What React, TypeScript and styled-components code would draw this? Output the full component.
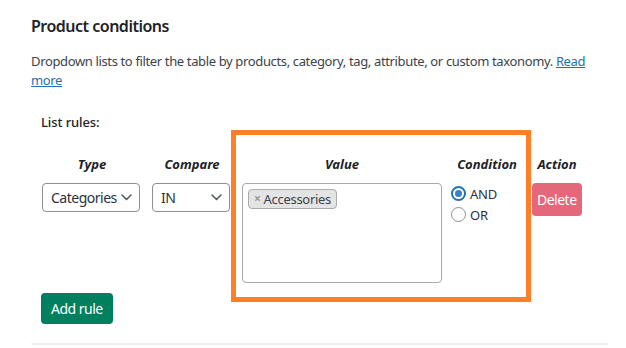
import React from "react";
import styled, { createGlobalStyle } from "styled-components";

const GlobalStyle = createGlobalStyle`
  html, body { margin: 0; padding: 0; background: #fff; }
  body {
    font-family: "Noto Sans", "Open Sans", sans-serif;
    color: #3c434a;
    -webkit-font-smoothing: antialiased;
  }
`;

const Page = styled.div`
  width: 626px;
  height: 348px;
  box-sizing: border-box;
  padding: 15px 18px 0 31px;
  overflow: hidden;
`;

const Title = styled.h2`
  margin: 0;
  font-size: 16px;
  line-height: 22px;
  font-weight: 600;
  letter-spacing: -0.5px;
  color: #1d2327;
`;

const Description = styled.p`
  margin: 15px 0 0;
  font-size: 13px;
  line-height: 19px;
  letter-spacing: -0.36px;
  color: #3c434a;
`;

const Link = styled.a`
  color: #2271b1;
  text-decoration: underline;
`;

const Rules = styled.div`
  position: relative;
  margin-top: 23px;
  padding-left: 10px;
`;

const RulesLabel = styled.div`
  font-size: 13px;
  line-height: 19px;
  font-weight: 500;
  letter-spacing: -0.1px;
  color: #1d2327;
`;

const RulesGrid = styled.div`
  display: grid;
  grid-template-columns: 100px 80px 200px 70px 50px;
  column-gap: 10px;
  row-gap: 9px;
  margin-top: 23px;
  padding-left: 1px;
`;

const HeadCell = styled.div`
  font-size: 13px;
  line-height: 19px;
  font-weight: 700;
  font-style: italic;
  color: #1d2327;
  text-align: center;
  white-space: nowrap;
`;

const Cell = styled.div`
  display: flex;
  flex-direction: column;
  align-items: flex-start;
`;

const SelectBox = styled.div<{ $width: number }>`
  width: ${(p) => p.$width}px;
  height: 29px;
  box-sizing: border-box;
  border: 1px solid #8c8f94;
  border-radius: 4px;
  display: flex;
  align-items: center;
  justify-content: space-between;
  padding: 0 7px 0 8px;
  font-size: 14px;
  letter-spacing: -0.5px;
  color: #2c3338;
  background: #fff;
`;

const Chevron = () => (
  <svg width="11" height="7" viewBox="0 0 11 7" fill="none">
    <path d="M1 1l4.5 4.5L10 1" stroke="#50575e" strokeWidth="1.5" strokeLinecap="round" strokeLinejoin="round" />
  </svg>
);

const ValueBox = styled.div`
  width: 200px;
  height: 100px;
  box-sizing: border-box;
  border: 1px solid #aaa;
  border-radius: 4px;
  padding: 5px;
  background: #fff;
  display: flex;
  align-items: flex-start;
`;

const Chip = styled.span`
  display: inline-flex;
  align-items: center;
  gap: 3px;
  height: 20px;
  box-sizing: border-box;
  padding: 0 5px 1px 5px;
  background: #e4e4e4;
  border: 1px solid #aaa;
  border-radius: 4px;
  font-size: 13px;
  letter-spacing: -0.3px;
  color: #3c434a;
`;

const ChipX = styled.span`
  color: #999;
  font-weight: 700;
  font-size: 12px;
`;

const RadioGroup = styled.div`
  display: flex;
  flex-direction: column;
  margin-left: -1px;
`;

const RadioRow = styled.label`
  display: flex;
  align-items: center;
  gap: 4px;
  height: 21px;
  font-size: 13px;
  letter-spacing: -0.2px;
  color: #2c3338;
`;

const RadioDot = styled.span<{ $checked?: boolean }>`
  width: 15px;
  height: 15px;
  box-sizing: border-box;
  border-radius: 50%;
  border: ${(p) => (p.$checked ? "2px solid #2271b1" : "1px solid #8c8f94")};
  display: flex;
  align-items: center;
  justify-content: center;
  background: #fff;
  &::after {
    content: "";
    display: ${(p) => (p.$checked ? "block" : "none")};
    width: 7px;
    height: 7px;
    border-radius: 50%;
    background: #3582c4;
  }
`;

const Button = styled.button<{ $tone: "danger" | "primary" }>`
  border: none;
  border-radius: 4px;
  font-family: inherit;
  font-size: 14px;
  letter-spacing: -0.5px;
  color: #fff;
  cursor: pointer;
  background: ${(p) => (p.$tone === "danger" ? "#e4677c" : "#00805f")};
  height: ${(p) => (p.$tone === "danger" ? 33 : 31)}px;
  padding: 0 ${(p) => (p.$tone === "danger" ? 5 : 10)}px;
`;

const AddRow = styled.div`
  margin-top: 10px;
`;

const Divider = styled.hr`
  margin: 19px 0 0 -10px;
  border: none;
  height: 2px;
  background: #f0f0f0;
`;

const Highlight = styled.div`
  position: absolute;
  left: 200px;
  top: 16.5px;
  width: 300px;
  height: 172px;
  box-sizing: border-box;
  border: 5px solid #ff7f27;
  pointer-events: none;
`;

export default function App() {
  return (
    <>
      <GlobalStyle />
      <Page>
        <Title>Product conditions</Title>
        <Description>
          Dropdown lists to filter the table by products, category, tag, attribute, or custom taxonomy.{" "}
          <Link href="#">Read more</Link>
        </Description>
        <Rules>
          <RulesLabel>List rules:</RulesLabel>
          <RulesGrid>
            <HeadCell>Type</HeadCell>
            <HeadCell>Compare</HeadCell>
            <HeadCell>Value</HeadCell>
            <HeadCell>Condition</HeadCell>
            <HeadCell>Action</HeadCell>

            <Cell>
              <SelectBox $width={98}>
                <span>Categories</span>
                <Chevron />
              </SelectBox>
            </Cell>
            <Cell>
              <SelectBox $width={78}>
                <span>IN</span>
                <Chevron />
              </SelectBox>
            </Cell>
            <Cell>
              <ValueBox>
                <Chip>
                  <ChipX>×</ChipX>
                  Accessories
                </Chip>
              </ValueBox>
            </Cell>
            <Cell>
              <RadioGroup>
                <RadioRow>
                  <RadioDot $checked />
                  AND
                </RadioRow>
                <RadioRow>
                  <RadioDot />
                  OR
                </RadioRow>
              </RadioGroup>
            </Cell>
            <Cell>
              <Button $tone="danger">Delete</Button>
            </Cell>
          </RulesGrid>
          <AddRow>
            <Button $tone="primary">Add rule</Button>
          </AddRow>
          <Divider />
          <Highlight />
        </Rules>
      </Page>
    </>
  );
}
